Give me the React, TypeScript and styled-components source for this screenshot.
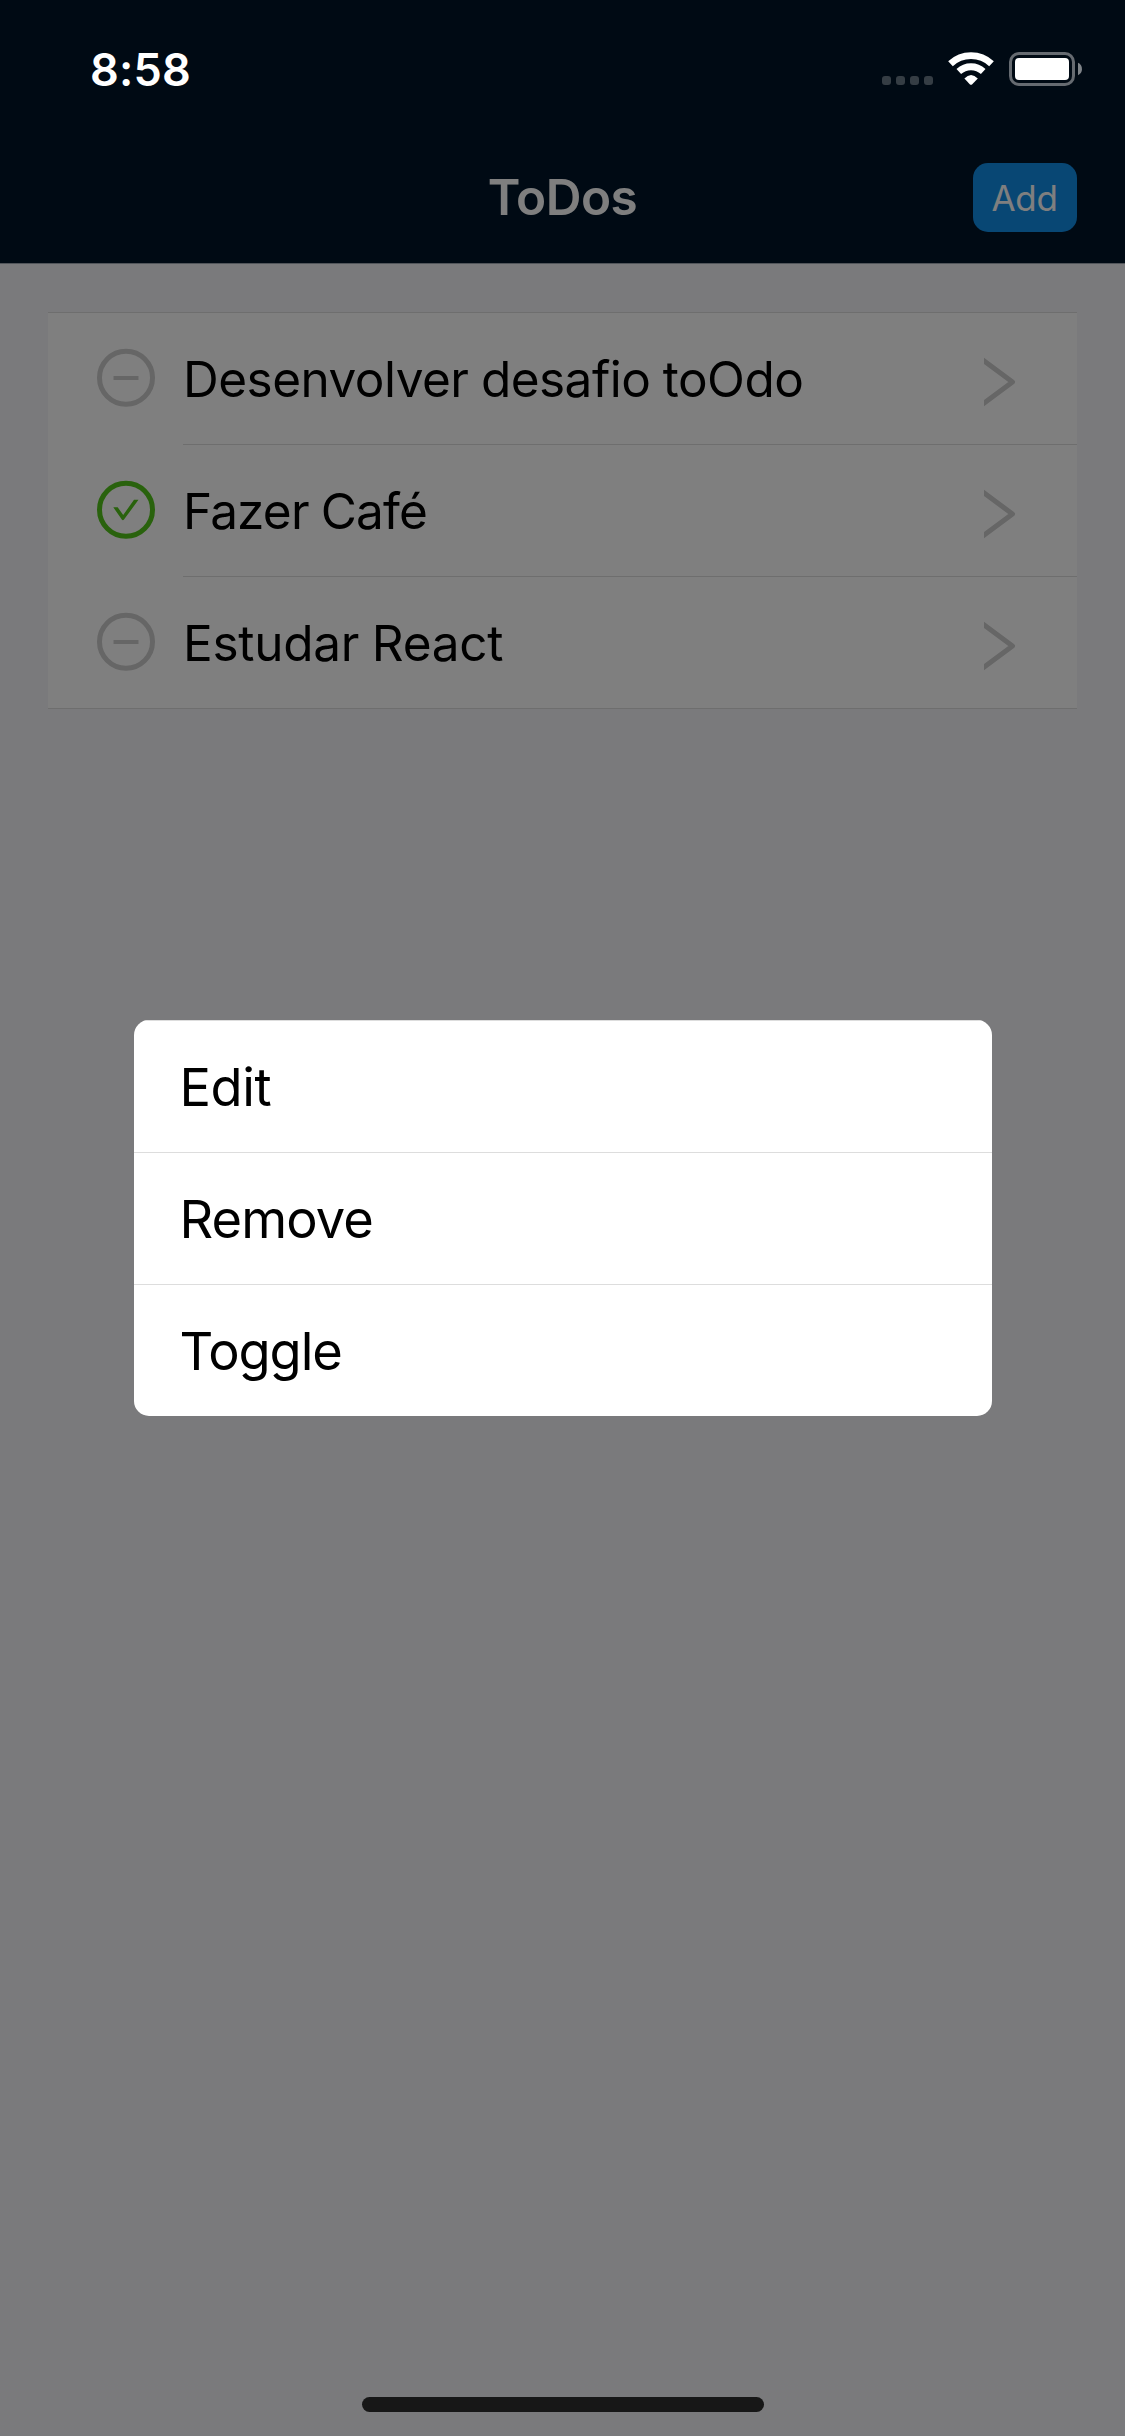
import React from "react";
import styled, { createGlobalStyle } from "styled-components";

const Global = createGlobalStyle`
  * { box-sizing: border-box; }
  body { margin: 0; background: #f5f5f9; font-family: Inter, "Liberation Sans", sans-serif; }
`;

const Screen = styled.div`
  display: flex;
  flex-direction: column;
  width: 1125px;
  height: 2436px;
  position: relative;
  background: #f5f5f9;
  overflow: hidden;
`;

const Header = styled.header`
  height: 264px;
  flex: none;
  display: flex;
  flex-direction: column;
  background: #001529;
  border-bottom: 1px solid #a3aab4;
`;

const StatusBar = styled.div`
  position: relative;
  z-index: 3;
  height: 132px;
  display: flex;
  justify-content: space-between;
  align-items: flex-start;
  padding: 42px 42px 0 90px;
`;

const Clock = styled.span`
  font-size: 45px;
  line-height: 55px;
  font-weight: 600;
  letter-spacing: 0.2px;
  color: #fff;
`;

const StatusIcons = styled.svg`
  display: block;
  width: 202px;
  height: 36px;
  margin-top: 9px;
`;

const NavBar = styled.div`
  height: 131px;
  display: grid;
  grid-template-columns: 1fr auto 1fr;
  align-items: center;
  padding: 0 48px;
`;

const Title = styled.h1`
  grid-column: 2;
  margin: 0 0 1px;
  font-size: 49.5px;
  line-height: 60px;
  font-weight: 600;
  letter-spacing: -0.5px;
  color: #fff;
`;

const AddButton = styled.button`
  justify-self: end;
  width: 104px;
  height: 69px;
  padding: 2px 1px 0 0;
  border: 0;
  border-radius: 15px;
  background: #108ee9;
  color: #fff;
  font: 400 35px/67px Inter, sans-serif;
  letter-spacing: -0.3px;
`;

const TodoList = styled.ul`
  list-style: none;
  margin: 48px 48px 0;
  padding: 0;
  background: #fff;
  border-top: 1px solid #ddd;
  border-bottom: 1px solid #ddd;
`;

const TodoRow = styled.li`
  display: flex;
  height: 132px;
  padding-left: 48px;
  &:last-child { height: 131px; }
`;

const TodoIcon = styled.svg<{ $done: boolean }>`
  width: 60px;
  height: 60px;
  margin: 35px 27px 0 0;
  flex: none;
  fill: none;
  stroke: ${(p) => (p.$done ? "#52c41a" : "#ccc")};
`;

const TodoBody = styled.div`
  flex: 1;
  display: flex;
  justify-content: space-between;
  padding-right: 60px;
  border-bottom: 1px solid #ddd;
  ${TodoRow}:last-child & { border-bottom: 0; }
`;

const TodoText = styled.span<{ $tracking: number }>`
  font-size: 49.5px;
  line-height: 60px;
  letter-spacing: ${(p) => p.$tracking}px;
  word-spacing: -1px;
  margin-top: 36px;
  color: #000;
  white-space: nowrap;
`;

const Arrow = styled.svg`
  width: 33px;
  height: 50px;
  margin-top: 44px;
`;

const Overlay = styled.div`
  position: absolute;
  inset: 0;
  z-index: 2;
  display: flex;
  align-items: center;
  justify-content: center;
  background: rgba(0, 0, 0, 0.5);
`;

const Menu = styled.div`
  width: 858px;
  border-radius: 15px;
  background: #fff;
  overflow: hidden;
`;

const MenuItem = styled.div<{ $tracking: number }>`
  height: 132px;
  border-top: 1px solid #ddd;
  padding: 34px 46px 0;
  font-size: 52.4px;
  line-height: 64px;
  letter-spacing: ${(p) => p.$tracking}px;
  color: #000;
`;

const HomeIndicator = styled.div`
  position: absolute;
  z-index: 3;
  left: 362px;
  bottom: 24px;
  width: 402px;
  height: 15px;
  border-radius: 7.5px;
  background: #171717;
`;

const todos = [
  { text: "Desenvolver desafio toOdo", done: false, tracking: -0.52 },
  { text: "Fazer Café", done: true, tracking: -0.85 },
  { text: "Estudar React", done: false, tracking: -0.27 },
];

const actions = [
  { label: "Edit", tracking: -0.4 },
  { label: "Remove", tracking: -0.9 },
  { label: "Toggle", tracking: -1.05 },
];

export default function App() {
  return (
    <Screen>
      <Global />
      <Header>
        <StatusBar>
          <Clock>8:58</Clock>
          <StatusIcons viewBox="881 51 202 36">
            <g fill="#353d44">
              {[882, 896, 910, 924].map((x) => (
                <rect key={x} x={x} y="76" width="9" height="9" rx="3" />
              ))}
            </g>
            <g fill="none" stroke="#fff" strokeWidth="6.8">
              <path d="M950.5 63.8A30 30 0 0 1 991.5 63.8" />
              <path d="M958.8 71.5A18 18 0 0 1 983.2 71.5" />
            </g>
            <path d="M964.4 78.6Q971 71.6 977.8 78.6L972 84.4Q971 85.3 970 84.4Z" fill="#fff" />
            <rect x="1010.5" y="53.5" width="63" height="31" rx="8.5" fill="none" stroke="#666b71" strokeWidth="3" />
            <rect x="1015" y="58" width="54" height="22" rx="4" fill="#fff" />
            <path d="M1078 62.8C1083.3 65 1083.3 73 1078 75.2Z" fill="#7f8489" />
          </StatusIcons>
        </StatusBar>
        <NavBar>
          <Title>ToDos</Title>
          <AddButton>Add</AddButton>
        </NavBar>
      </Header>
      <TodoList>
        {todos.map((t) => (
          <TodoRow key={t.text}>
            <TodoIcon $done={t.done} viewBox="0 0 60 60">
              <circle cx="30" cy="29.8" r="26.5" strokeWidth="5" />
              {t.done ? (
                <path d="M17.3 27.3H21.7L27.2 35L38 19.8H42.5L28 39.6Q26.9 41 25.8 39.6Z" fill="#52c41a" stroke="none" />
              ) : (
                <path d="M17.5 30H42.5" strokeWidth="4" />
              )}
            </TodoIcon>
            <TodoBody>
              <TodoText $tracking={t.tracking}>{t.text}</TodoText>
              <Arrow viewBox="0 0 33 50">
                <path d="M-2 2.5L28.5 25L-2 47.5" fill="none" stroke="#ccc" strokeWidth="5" strokeLinejoin="round" />
              </Arrow>
            </TodoBody>
          </TodoRow>
        ))}
      </TodoList>
      <Overlay>
        <Menu>
          {actions.map((a) => (
            <MenuItem key={a.label} $tracking={a.tracking}>{a.label}</MenuItem>
          ))}
        </Menu>
      </Overlay>
      <HomeIndicator />
    </Screen>
  );
}
